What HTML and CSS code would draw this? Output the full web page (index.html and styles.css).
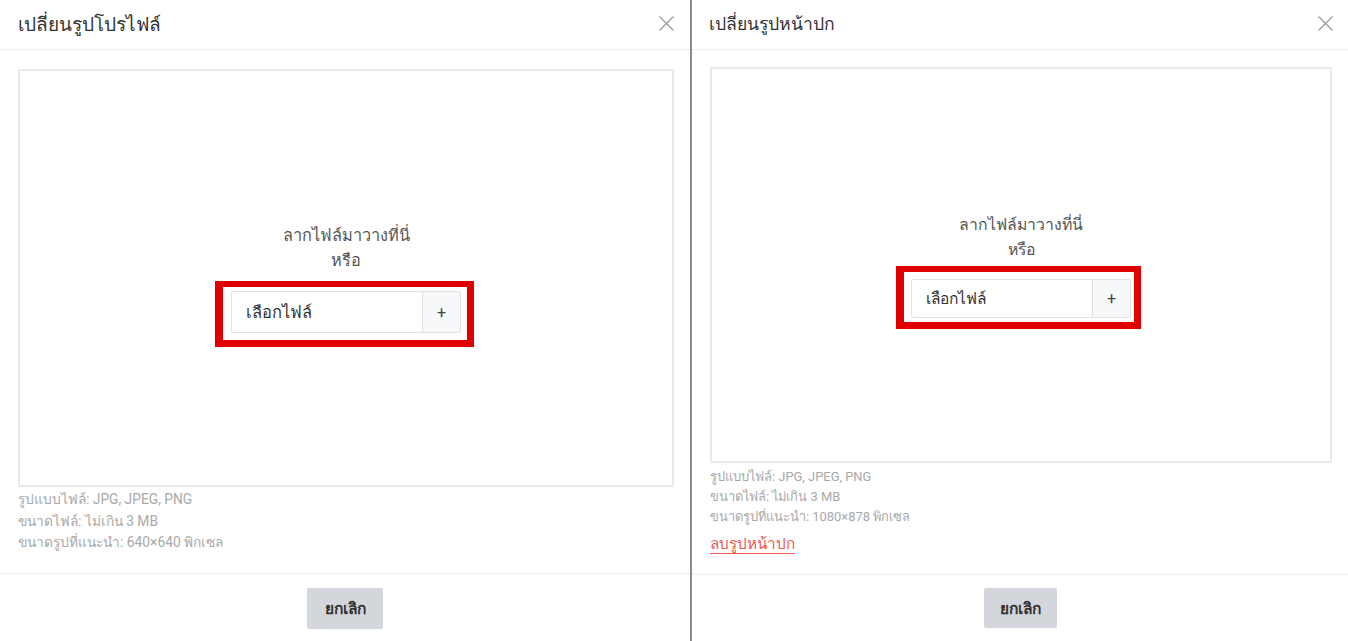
FILE: index.html
```html
<!DOCTYPE html>
<html lang="th">
<head>
<meta charset="utf-8">
<title>เปลี่ยนรูป</title>
<link rel="stylesheet" href="styles.css">
</head>
<body>
<div class="screen">
  <section class="panel panel-profile">
    <header class="head">
      <h2 class="title">เปลี่ยนรูปโปรไฟล์</h2>
      <button class="close" aria-label="ปิด">
        <svg viewBox="0 0 15 15" width="15" height="15"><path d="M0.5 0.5L14.5 14.5M14.5 0.5L0.5 14.5" stroke="#9a9a9a" stroke-width="1.3" fill="none"/></svg>
      </button>
    </header>
    <div class="body">
      <div class="drop">
        <p class="drop-text">ลากไฟล์มาวางที่นี่<br>หรือ</p>
        <div class="pick">
          <span class="pick-label">เลือกไฟล์</span>
          <span class="pick-add">+</span>
        </div>
      </div>
      <div class="hints">
        <div>รูปแบบไฟล์: JPG, JPEG, PNG</div>
        <div>ขนาดไฟล์: ไม่เกิน 3 MB</div>
        <div>ขนาดรูปที่แนะนำ: 640×640 พิกเซล</div>
      </div>
    </div>
    <footer class="foot">
      <button class="cancel">ยกเลิก</button>
    </footer>
  </section>
  <section class="panel panel-cover">
    <header class="head">
      <h2 class="title">เปลี่ยนรูปหน้าปก</h2>
      <button class="close" aria-label="ปิด">
        <svg viewBox="0 0 15 15" width="15" height="15"><path d="M0.5 0.5L14.5 14.5M14.5 0.5L0.5 14.5" stroke="#9a9a9a" stroke-width="1.3" fill="none"/></svg>
      </button>
    </header>
    <div class="body">
      <div class="drop">
        <p class="drop-text">ลากไฟล์มาวางที่นี่<br>หรือ</p>
        <div class="pick">
          <span class="pick-label">เลือกไฟล์</span>
          <span class="pick-add">+</span>
        </div>
      </div>
      <div class="hints">
        <div>รูปแบบไฟล์: JPG, JPEG, PNG</div>
        <div>ขนาดไฟล์: ไม่เกิน 3 MB</div>
        <div>ขนาดรูปที่แนะนำ: 1080×878 พิกเซล</div>
      </div>
      <a class="remove" href="#">ลบรูปหน้าปก</a>
    </div>
    <footer class="foot">
      <button class="cancel">ยกเลิก</button>
    </footer>
  </section>
</div>
</body>
</html>
```

FILE: styles.css
```css
* { box-sizing: border-box; }
html, body { margin: 0; padding: 0; background: #fff; }
body {
  font-family: Roboto, "Noto Sans", "DejaVu Sans", sans-serif;
  color: #333;
  overflow: hidden;
}
.screen {
  display: flex;
  width: 1348px;
  height: 641px;
}
.panel {
  display: flex;
  flex-direction: column;
  height: 641px;
}
.panel-profile {
  width: 692px;
  border-right: 2px solid #8c8c8c;
}
.panel-cover {
  width: 656px;
}
.head {
  height: 50px;
  border-bottom: 1px solid #eeeeee;
  display: flex;
  align-items: center;
  justify-content: space-between;
  padding: 0 16px 2px 18px;
}
.panel-cover .head { padding: 0 15px 2px 17px; }
.title {
  margin: 0;
  font-size: 19px;
  font-weight: normal;
  color: #333;
}
.panel-cover .title { font-size: 17.6px; }
.close {
  border: 0;
  background: none;
  padding: 0;
  width: 15px;
  height: 15px;
  display: block;
}
.close svg { display: block; }
.body {
  flex: 1;
  padding: 19px 16px 0 18px;
}
.panel-cover .body { padding: 17px 16px 0 18px; }
.drop {
  height: 418px;
  border: 2px solid #e9e9e9;
  display: flex;
  flex-direction: column;
  align-items: center;
  justify-content: center;
}
.panel-cover .drop { height: 396px; }
.drop-text {
  margin: 0 0 18px;
  text-align: center;
  font-size: 16.3px;
  line-height: 25px;
  color: #555;
}
.panel-cover .drop-text { font-size: 15.8px; margin-bottom: 17px; }
.pick {
  position: relative;
  display: flex;
  width: 230px;
  height: 42px;
  border: 1px solid #dfe2e6;
  border-radius: 2px;
  background: #fff;
}
.pick::after {
  content: "";
  position: absolute;
  top: -11px;
  right: -14px;
  bottom: -15px;
  left: -17px;
  border: 7px solid #e00000;
  border-width: 6px 7px 7px 8px;
  pointer-events: none;
}
.panel-cover .pick { width: 220px; height: 39px; }
.panel-cover .pick::after { top: -14px; right: -11px; bottom: -12px; left: -16px; }
.pick-label {
  flex: 1;
  display: flex;
  align-items: center;
  padding-left: 14px;
  font-size: 16.5px;
  color: #333;
}
.panel-cover .pick-label { font-size: 15.5px; }
.pick-add {
  width: 38px;
  border-left: 1px solid #dfe2e6;
  background: #f7f8fa;
  display: flex;
  align-items: center;
  justify-content: center;
  font-size: 16px;
  color: #444;
}
.hints {
  margin-top: 2px;
  font-size: 13.8px;
  line-height: 21.5px;
  color: #a9a9a9;
}
.panel-cover .hints {
  margin-top: 4px;
  font-size: 12.9px;
  line-height: 20px;
}
.remove {
  display: inline-block;
  margin-top: 7px;
  font-size: 15.3px;
  line-height: 20px;
  color: #ec5a50;
  text-decoration: underline;
  text-underline-offset: 4px;
}
.foot {
  height: 68px;
  border-top: 1px solid #eeeeee;
  display: flex;
  justify-content: center;
  align-items: flex-start;
  padding-top: 14px;
}
.panel-cover .foot { height: 67px; padding-top: 13px; }
.cancel {
  width: 76px;
  height: 41px;
  border: 0;
  border-radius: 2px;
  background: #d3d6db;
  font-family: inherit;
  font-size: 15.5px;
  font-weight: 600;
  color: #333;
}
.panel-cover .cancel { width: 73px; height: 40px; }
```
